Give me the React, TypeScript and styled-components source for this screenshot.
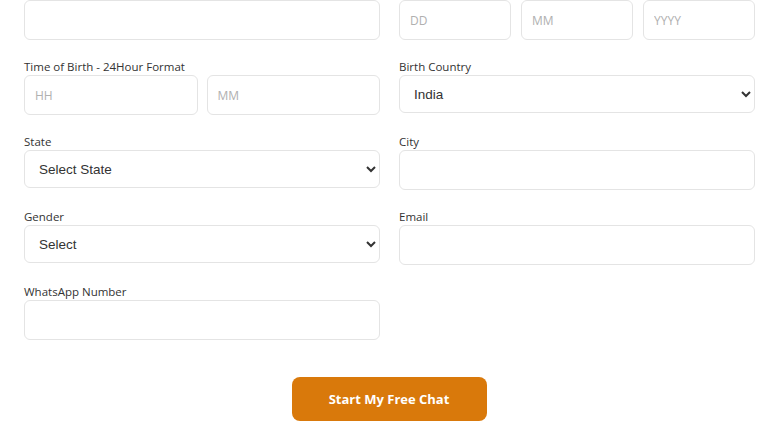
import React from 'react';
import styled, { createGlobalStyle } from 'styled-components';

const GlobalStyle = createGlobalStyle`
  html, body {
    margin: 0;
    padding: 0;
    background: #fff;
  }
  body {
    font-family: 'Open Sans', 'Noto Sans', sans-serif;
    color: #333;
  }
  * {
    box-sizing: border-box;
  }
`;

const App: React.FC = () => {
  return (
    <>
      <GlobalStyle />
      <Page>
        <FormGrid>
          <Field>
            <TextInput type="text" aria-label="Full Name" />
          </Field>
          <Field>
            <SplitRow $cols={3}>
              <TextInput type="text" placeholder="DD" />
              <TextInput type="text" placeholder="MM" />
              <TextInput type="text" placeholder="YYYY" />
            </SplitRow>
          </Field>

          <Field>
            <Label>Time of Birth - 24Hour Format</Label>
            <SplitRow $cols={2}>
              <TextInput type="text" placeholder="HH" />
              <TextInput type="text" placeholder="MM" />
            </SplitRow>
          </Field>
          <Field>
            <Label>Birth Country</Label>
            <Select defaultValue="India">
              <option>India</option>
            </Select>
          </Field>

          <Field>
            <Label>State</Label>
            <Select defaultValue="">
              <option value="">Select State</option>
            </Select>
          </Field>
          <Field>
            <Label>City</Label>
            <TextInput type="text" />
          </Field>

          <Field>
            <Label>Gender</Label>
            <Select defaultValue="">
              <option value="">Select</option>
              <option>Male</option>
              <option>Female</option>
            </Select>
          </Field>
          <Field>
            <Label>Email</Label>
            <TextInput type="email" />
          </Field>

          <Field>
            <Label>WhatsApp Number</Label>
            <TextInput type="tel" />
          </Field>
        </FormGrid>

        <Actions>
          <SubmitBtn type="button">Start My Free Chat</SubmitBtn>
        </Actions>
      </Page>
    </>
  );
};

export default App;

const Page = styled.div`
  width: 780px;
  padding: 0 25px 0 24px;
`;

const FormGrid = styled.div`
  display: grid;
  grid-template-columns: 356px 356px;
  column-gap: 19px;
  row-gap: 20px;
`;

const Field = styled.div`
  display: flex;
  flex-direction: column;
`;

const Label = styled.label`
  font-size: 11.5px;
  line-height: 14px;
  color: #333;
  margin-bottom: 1px;
  white-space: nowrap;
`;

const SplitRow = styled.div<{ $cols: number }>`
  display: grid;
  grid-template-columns: repeat(${(p) => p.$cols}, 1fr);
  column-gap: ${(p) => (p.$cols === 3 ? 10 : 9)}px;
`;

const TextInput = styled.input`
  width: 100%;
  height: 40px;
  padding: 0 10px;
  border: 1px solid #e4e4e4;
  border-radius: 6px;
  background: #fff;
  font-family: 'Open Sans', 'Noto Sans', sans-serif;
  font-size: 12px;
  color: #333;
  outline: none;

  &::placeholder {
    color: #b0b0b0;
  }
`;

const Select = styled.select`
  width: 100%;
  height: 38px;
  padding: 0 8px 0 10px;
  border: 1px solid #e4e4e4;
  border-radius: 6px;
  background-color: #fff;
  font-family: 'Liberation Sans', Arial, sans-serif;
  font-size: 13.5px;
  color: #333;
  outline: none;
`;

const Actions = styled.div`
  display: flex;
  justify-content: center;
  margin-top: 37px;
  padding-right: 1px;
`;

const SubmitBtn = styled.button`
  width: 195px;
  height: 44px;
  border: none;
  border-radius: 8px;
  background: #d9790b;
  color: #fff;
  font-family: 'Open Sans', 'Noto Sans', sans-serif;
  font-weight: 700;
  font-size: 13px;
  cursor: pointer;
`;
